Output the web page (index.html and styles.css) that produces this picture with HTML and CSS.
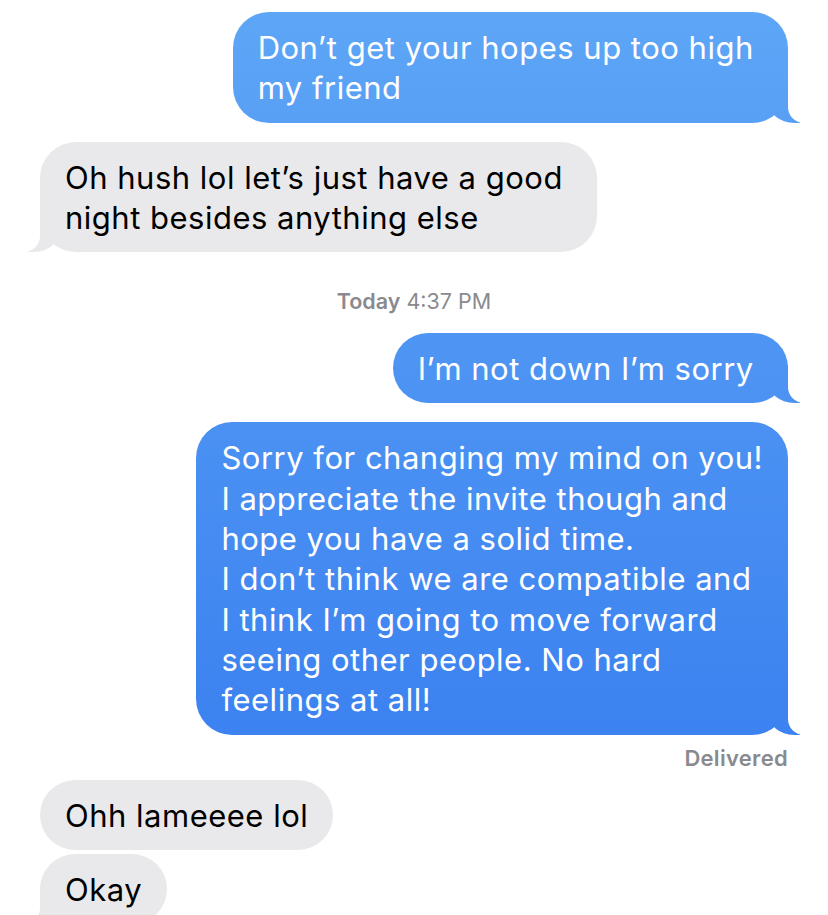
FILE: index.html
```html
<!DOCTYPE html>
<html lang="en">
<head>
  <meta charset="utf-8">
  <title>Messages</title>
  <meta name="viewport" content="width=device-width, initial-scale=1">
  <link rel="stylesheet" href="styles.css">
</head>
<body>
  <div class="thread">
    <div class="msg sent tail">Don’t get your hopes up too high&nbsp;<br>my friend</div>
    <div class="msg received tail">Oh hush lol let’s just have a good&nbsp;<br>night besides anything else</div>

    <div class="stamp"><strong>Today</strong> 4:37 PM</div>

    <div class="msg sent tail">I’m not down I’m sorry&nbsp;</div>
    <div class="msg sent tail">Sorry for changing my mind on you!<br>I appreciate the invite though and<br>hope you have a solid time.<br>I don’t think we are compatible and<br>I think I’m going to move forward<br>seeing other people. No hard<br>feelings at all!</div>
    <div class="status">Delivered</div>

    <div class="msg received">Ohh lameeee lol</div>
    <div class="msg received tail cont">Okay</div>
  </div>
</body>
</html>
```

FILE: styles.css
```css
body {
  margin: 0;
  background: #fff;
  font-family: Inter, "Noto Sans", sans-serif;
  -webkit-font-smoothing: antialiased;
}
.thread {
  display: flex;
  flex-direction: column;
  padding: 12px 40px 0;
}
.msg {
  position: relative;
  max-width: 640px;
  margin-top: 19px;
  padding: 16px 25px 14px;
  border-radius: 36px;
  font-size: 31px;
  line-height: 40.3px;
  letter-spacing: 0.5px;
}
.msg:first-child,
.stamp + .msg,
.status + .msg {
  margin-top: 0;
}
.msg.cont {
  margin-top: 4px;
}
.sent {
  align-self: flex-end;
  color: #fff;
  background: linear-gradient(#5ea6f6, #3479ef) fixed;
}
.received {
  align-self: flex-start;
  color: #000;
  background: #e9e9eb;
}

/* bubble tails */
.tail::before,
.tail::after {
  content: "";
  position: absolute;
  bottom: 0;
  height: 38px;
}
.sent.tail::before {
  right: -12px;
  width: 32px;
  background: inherit;
  border-bottom-left-radius: 26px 22px;
}
.sent.tail::after {
  right: -42px;
  width: 42px;
  background: #fff;
  border-bottom-left-radius: 16px;
}
.received.tail::before {
  left: -12px;
  width: 32px;
  background: inherit;
  border-bottom-right-radius: 26px 22px;
}
.received.tail::after {
  left: -42px;
  width: 42px;
  background: #fff;
  border-bottom-right-radius: 16px;
}

.stamp {
  margin: 37px 0 20px;
  text-align: center;
  font-size: 21.5px;
  line-height: 24px;
  color: #8a8a8e;
}
.stamp strong {
  font-weight: 600;
}
.status {
  align-self: flex-end;
  margin: 11px 0 10px;
  font-size: 22px;
  line-height: 24px;
  letter-spacing: 0.3px;
  font-weight: 600;
  color: #8a8a8e;
}
```
